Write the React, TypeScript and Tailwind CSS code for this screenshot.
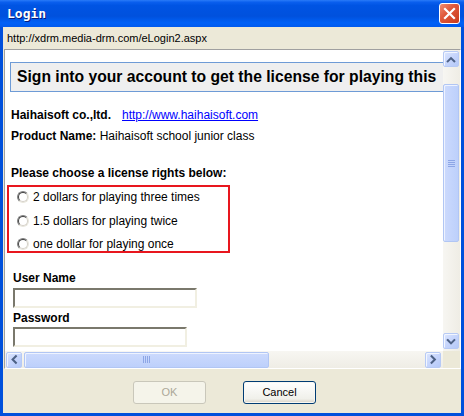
import React from "react";

const sans = { fontFamily: '"Liberation Sans", Arial, sans-serif' };

function Chevron({ dir }: { dir: "up" | "down" | "left" | "right" }) {
  const pts: Record<string, string> = {
    up: "4,9.5 7.5,6 11,9.5",
    down: "4,6 7.5,9.5 11,6",
    left: "9.5,4 6,7.5 9.5,11",
    right: "6,4 9.5,7.5 6,11",
  };
  return (
    <svg width="15" height="15" viewBox="0 0 15 15">
      <polyline points={pts[dir]} fill="none" stroke="#4D6185" strokeWidth="2.2" strokeLinecap="square" />
    </svg>
  );
}

function SBtn({ dir }: { dir: "up" | "down" | "left" | "right" }) {
  return (
    <div className="w-[16px] h-[16px] shrink-0 rounded-[2px] border border-[#B7CAF5] bg-[linear-gradient(135deg,#DCE6FE_0%,#C6D5FC_50%,#B5C9F8_100%)] flex items-center justify-center shadow-[inset_1px_1px_0_#F2F6FF]">
      <Chevron dir={dir} />
    </div>
  );
}

function Radio() {
  return (
    <div className="w-[12px] h-[12px] rounded-full border border-t-[#808080] border-l-[#808080] border-r-[#E8E6DC] border-b-[#E8E6DC] bg-white shrink-0 flex items-center justify-center">
      <div className="w-[10px] h-[10px] rounded-full border border-t-[#404040] border-l-[#404040] border-r-[#D4D0C8] border-b-[#D4D0C8] bg-white" />
    </div>
  );
}

export default function App() {
  return (
    <div className="w-[464px] h-[416px] bg-[#0050DC] flex flex-col overflow-hidden" style={sans}>
      {/* Title bar */}
      <div className="h-[27px] shrink-0 flex items-center justify-between pl-[7px] pr-[4px] bg-[linear-gradient(to_bottom,#2A7BF8_0%,#0A5FEE_8%,#0054E3_20%,#0051DD_60%,#0061F7_85%,#005AEE_100%)]">
        <span
          className="text-white font-bold text-[13px] [text-shadow:1px_1px_0_#0A1A7A]"
          style={{ fontFamily: '"DejaVu Sans Mono", monospace' }}
        >
          Login
        </span>
        <div className="w-[21px] h-[21px] rounded-[3px] border border-white bg-[linear-gradient(135deg,#F08D74_0%,#E05A3C_40%,#C93A1C_100%)] flex items-center justify-center">
          <svg width="13" height="13" viewBox="0 0 13 13">
            <path d="M2 2 L11 11 M11 2 L2 11" stroke="white" strokeWidth="2.2" strokeLinecap="square" />
          </svg>
        </div>
      </div>

      {/* Body */}
      <div className="flex-1 mx-[3px] mb-[3px] bg-[#ECE9D8] flex flex-col">
        {/* address */}
        <div className="h-[22px] shrink-0 flex items-center pl-[4px] text-[11px] text-black">
          http://xdrm.media-drm.com/eLogin2.aspx
        </div>

        {/* browser frame */}
        <div className="ml-[1px] w-[457px] h-[320px] shrink-0 border-t border-l border-t-[#A0A0A0] border-l-[#A0A0A0] border-b border-r border-b-white border-r-white bg-white flex flex-col">
          <div className="flex h-[301px]">
            {/* content */}
            <div className="w-[438px] h-[301px] overflow-hidden text-[12px] text-black">
              <div className="mt-[12px] ml-[5px] w-[433px] h-[30px] border border-r-0 border-[#6E9BD6] bg-[#EFEFEF] flex items-center pl-[6px] text-[15.7px] font-bold whitespace-nowrap">
                Sign into your account to get the license for playing this
              </div>
              <div className="ml-[6px] mt-[16px] leading-[15px] flex">
                <span className="font-bold w-[111px]">Haihaisoft co.,ltd.</span>
                <span className="text-[#0000FF] underline">http://www.haihaisoft.com</span>
              </div>
              <div className="ml-[6px] mt-[6px] leading-[15px]">
                <span className="font-bold">Product Name:</span> Haihaisoft school junior class
              </div>
              <div className="ml-[6px] mt-[22px] leading-[15px] font-bold">Please choose a license rights below:</div>
              <div className="ml-[2px] mt-[4px] w-[223px] h-[68px] border-2 border-[#E8161E] flex flex-col pl-[8px] pt-[2px]">
                <div className="h-[16px] flex items-center gap-[4px]">
                  <Radio />
                  <span>2 dollars for playing three times</span>
                </div>
                <div className="h-[16px] mt-[8px] flex items-center gap-[4px]">
                  <Radio />
                  <span>1.5 dollars for playing twice</span>
                </div>
                <div className="h-[16px] mt-[7px] flex items-center gap-[4px]">
                  <Radio />
                  <span>one dollar for playing once</span>
                </div>
              </div>
              <div className="ml-[8px] mt-[18px] leading-[15px] font-bold">User Name</div>
              <div className="ml-[8px] mt-[2px] w-[184px] h-[20px] border-2 border-t-[#7A786C] border-l-[#7A786C] border-r-[#F1EFE2] border-b-[#F1EFE2] bg-white" />
              <div className="ml-[8px] mt-[3px] leading-[15px] font-bold">Password</div>
              <div className="ml-[8px] mt-[1px] w-[174px] h-[20px] border-2 border-t-[#7A786C] border-l-[#7A786C] border-r-[#F1EFE2] border-b-[#F1EFE2] bg-white" />
            </div>
            {/* vertical scrollbar */}
            <div className="w-[17px] h-[301px] bg-[linear-gradient(to_right,#F7F6F2,#EFEDE5)] flex flex-col pt-[1px]">
              <SBtn dir="up" />
              <div className="mt-[17px] w-[16px] h-[158px] rounded-[2px] border border-[#B1C6F4] bg-[linear-gradient(to_right,#CCDAFD,#BDD0FB)] shadow-[inset_1px_1px_0_#EEF3FF] flex flex-col items-center justify-center gap-[1px]">
                <div className="w-[7px] h-[1px] bg-[#8DA6E6]" />
                <div className="w-[7px] h-[1px] bg-[#8DA6E6]" />
                <div className="w-[7px] h-[1px] bg-[#8DA6E6]" />
                <div className="w-[7px] h-[1px] bg-[#8DA6E6]" />
              </div>
              <div className="flex-1" />
              <div className="mb-[2px]">
                <SBtn dir="down" />
              </div>
            </div>
          </div>
          {/* horizontal scrollbar */}
          <div className="flex h-[17px]">
            <div className="w-[438px] h-[17px] bg-[linear-gradient(to_bottom,#F7F6F2,#EFEDE5)] flex items-center pl-[1px]">
              <SBtn dir="left" />
              <div className="ml-[2px] w-[245px] h-[16px] rounded-[2px] border border-[#B1C6F4] bg-[linear-gradient(to_bottom,#CCDAFD,#BDD0FB)] shadow-[inset_1px_1px_0_#EEF3FF] flex items-center justify-center gap-[1px]">
                <div className="w-[1px] h-[7px] bg-[#8DA6E6]" />
                <div className="w-[1px] h-[7px] bg-[#8DA6E6]" />
                <div className="w-[1px] h-[7px] bg-[#8DA6E6]" />
                <div className="w-[1px] h-[7px] bg-[#8DA6E6]" />
              </div>
              <div className="flex-1" />
              <div className="mr-[2px]">
                <SBtn dir="right" />
              </div>
            </div>
            <div className="w-[17px] h-[17px] bg-[#ECE9D8]" />
          </div>
        </div>

        {/* buttons */}
        <div className="flex-1 flex items-start pt-[12px] pl-[130px] gap-[37px] text-[11px]">
          <div className="w-[73px] h-[23px] rounded-[3px] border border-[#C9C7BA] bg-[#F5F4EA] text-[#ACA899] flex items-center justify-center">
            OK
          </div>
          <div className="w-[73px] h-[23px] rounded-[3px] border border-[#003C74] bg-[linear-gradient(to_bottom,#FFFFFF,#F0F0EA_80%,#D6D0C5)] text-black flex items-center justify-center shadow-[inset_0_0_0_1px_#F8F7F2]">
            Cancel
          </div>
        </div>
      </div>
    </div>
  );
}
